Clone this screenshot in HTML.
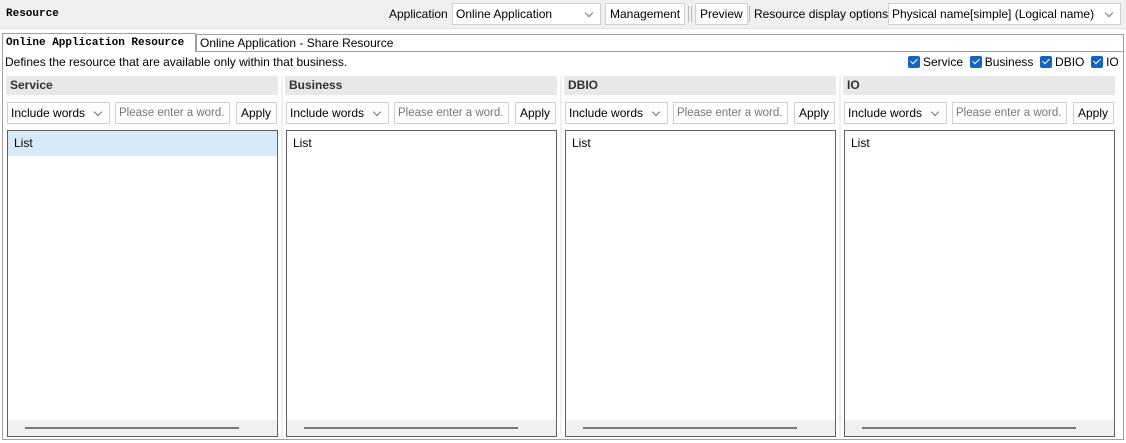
<!DOCTYPE html>
<html><head><style>
*{box-sizing:border-box;margin:0;padding:0}
body{width:1126px;height:443px;background:#fff;font-family:"Liberation Sans","Noto Sans CJK KR",sans-serif;font-size:12px;color:#000;position:relative;overflow:hidden}
.a{position:absolute}
.top{left:0;top:0;width:1126px;height:29px;background:#f0f0f0;border-bottom:1px solid #e4e4e4}
.btn{position:absolute;background:#fdfdfd;border:1px solid #d0d0d0;height:22px;line-height:20px;padding:0 4px;font-size:12px;white-space:nowrap}
.sel,.inp{position:absolute;background:#fff;border:1px solid #d0d0d0;height:22px;line-height:20px;padding:0 3px;white-space:nowrap;overflow:hidden}
.inp{color:#777;font-size:11.5px}
.sel:after{content:"";position:absolute;right:8px;top:6px;width:5px;height:5px;border-right:1px solid #777;border-bottom:1px solid #777;transform:rotate(45deg)}
.mono{font-family:"Liberation Mono",monospace;font-weight:bold;font-size:11px}
.cb{display:inline-block;width:12px;height:12px;background:#1565c0;border-radius:2px;vertical-align:-2px;margin-right:3px;position:relative}
.cb:after{content:"";position:absolute;left:4px;top:1px;width:3px;height:6px;border-right:1.3px solid #fff;border-bottom:1.3px solid #fff;transform:rotate(45deg)}
.ph{height:19px;background:#e8e8e8;font-weight:bold;line-height:19px;padding-left:4px;color:#333}
.list{border:1px solid #606060;background:#fff}
</style></head><body>
<div class="a top"></div>
<div class="a mono" style="left:6px;top:8px">Resource</div>
<div class="a" style="left:389px;top:7px">Application</div>
<div class="sel" style="left:452px;top:3px;width:149px">Online Application</div>
<div class="btn" style="left:605px;top:3px">Management</div>
<div class="a" style="left:688px;top:6px;width:1px;height:16px;background:#bbb"></div>
<div class="a" style="left:691px;top:6px;width:1px;height:16px;background:#bbb"></div>
<div class="btn" style="left:695px;top:3px">Preview</div>
<div class="a" style="left:749px;top:6px;width:1px;height:16px;background:#bbb"></div>
<div class="a" style="left:754px;top:7px">Resource display options</div>
<div class="sel" style="left:888px;top:3px;width:233px">Physical name[simple] (Logical name)</div>
<div class="a" style="left:2px;top:34px;width:1122px;height:406px;border:1px solid #a0a0a0;border-top:none"></div>
<div class="a" style="left:196px;top:51px;width:928px;height:1px;background:#a0a0a0"></div>
<div class="a" style="left:196px;top:34px;width:928px;height:18px;border:1px solid #a0a0a0;border-bottom:none"></div>
<div class="a mono" style="left:2px;top:33px;width:194px;height:19px;border:1px solid #a0a0a0;border-bottom:none;background:#fff;padding:3px 0 0 3px">Online Application Resource</div>
<div class="a" style="left:200px;top:36px">Online Application - Share Resource</div>
<div class="a" style="left:5px;top:55px">Defines the resource that are available only within that business.</div>
<div class="a" style="left:908px;top:55px;white-space:nowrap"><span class="cb"></span>Service&nbsp; <span class="cb"></span>Business&nbsp; <span class="cb"></span>DBIO&nbsp; <span class="cb"></span>IO</div>
<div class="a" style="left:6px;top:76px;width:272px"><div class="ph">Service</div></div>
<div class="a" style="left:285px;top:76px;width:272px"><div class="ph">Business</div></div>
<div class="a" style="left:564px;top:76px;width:272px"><div class="ph">DBIO</div></div>
<div class="a" style="left:843px;top:76px;width:272px"><div class="ph">IO</div></div>
<div class="a" style="left:281px;top:76px;width:2px;height:362px;background:#f0f0f0"></div>
<div class="a" style="left:560px;top:76px;width:2px;height:362px;background:#f0f0f0"></div>
<div class="a" style="left:839px;top:76px;width:2px;height:362px;background:#f0f0f0"></div>

<div class="sel" style="left:7px;top:102px;width:103px">Include words</div>
<div class="inp" style="left:115px;top:102px;width:115px">Please enter a word.</div>
<div class="btn" style="left:236px;top:102px;width:41px">Apply</div>
<div class="sel" style="left:286px;top:102px;width:103px">Include words</div>
<div class="inp" style="left:394px;top:102px;width:115px">Please enter a word.</div>
<div class="btn" style="left:515px;top:102px;width:41px">Apply</div>
<div class="sel" style="left:565px;top:102px;width:103px">Include words</div>
<div class="inp" style="left:673px;top:102px;width:115px">Please enter a word.</div>
<div class="btn" style="left:794px;top:102px;width:41px">Apply</div>
<div class="sel" style="left:844px;top:102px;width:103px">Include words</div>
<div class="inp" style="left:952px;top:102px;width:115px">Please enter a word.</div>
<div class="btn" style="left:1073px;top:102px;width:41px">Apply</div>

<div class="a list" style="left:7px;top:130px;width:271px;height:307px"><div style="background:#d9e9f8;height:25px;padding:5px 6px">List</div><div style="position:absolute;left:0;right:0;bottom:0;height:16px;background:#f0f0f0"><div style="position:absolute;left:17px;width:214px;top:7px;height:2px;background:#7a7a7a"></div></div></div>
<div class="a list" style="left:286px;top:130px;width:271px;height:307px"><div style="height:25px;padding:5px 6px">List</div><div style="position:absolute;left:0;right:0;bottom:0;height:16px;background:#f0f0f0"><div style="position:absolute;left:17px;width:214px;top:7px;height:2px;background:#7a7a7a"></div></div></div>
<div class="a list" style="left:565px;top:130px;width:271px;height:307px"><div style="height:25px;padding:5px 6px">List</div><div style="position:absolute;left:0;right:0;bottom:0;height:16px;background:#f0f0f0"><div style="position:absolute;left:17px;width:214px;top:7px;height:2px;background:#7a7a7a"></div></div></div>
<div class="a list" style="left:844px;top:130px;width:271px;height:307px"><div style="height:25px;padding:5px 6px">List</div><div style="position:absolute;left:0;right:0;bottom:0;height:16px;background:#f0f0f0"><div style="position:absolute;left:17px;width:214px;top:7px;height:2px;background:#7a7a7a"></div></div></div>
</body></html>
